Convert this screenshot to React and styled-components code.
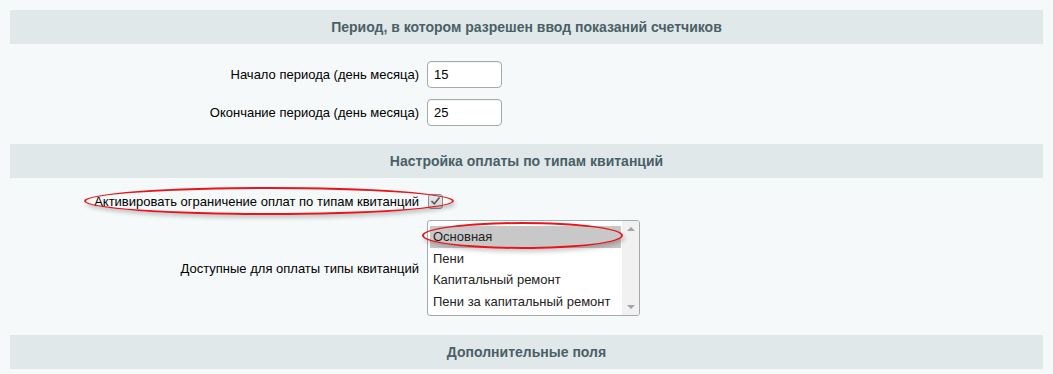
import React from 'react';
import styled, { createGlobalStyle } from 'styled-components';

const GlobalStyle = createGlobalStyle`
  body {
    margin: 0;
    background: #f5f9f9;
    font-family: "Liberation Sans", Arial, sans-serif;
    font-size: 13px;
    color: #000;
  }
`;

const Page = styled.div`
  padding: 10px 10px 0;
  width: 1033px;
`;

const SectionHeader = styled.div`
  height: 34px;
  background: #e0e8ea;
  display: flex;
  align-items: center;
  justify-content: center;
  font-weight: bold;
  font-size: 14px;
  color: #4b5f66;
`;

const SectionBody = styled.div`
  padding: ${(p) => p.$pad};
`;

const Row = styled.div`
  display: grid;
  grid-template-columns: 413px 1fr;
  column-gap: 4px;
  align-items: center;
  min-height: ${(p) => p.$h || 38}px;
  position: relative;
`;

const Label = styled.div`
  text-align: right;
  padding-right: 4px;
  white-space: nowrap;
`;

const Cell = styled.div`
  display: flex;
  align-items: center;
`;

const TextInput = styled.div`
  box-sizing: border-box;
  width: 75px;
  height: 27px;
  border: 1px solid #a4abad;
  border-radius: 4px;
  background: #fff;
  padding-left: 6px;
  display: flex;
  align-items: center;
  box-shadow: inset 0 1px 1px rgba(0, 0, 0, 0.06);
`;

const Checkbox = styled.div`
  box-sizing: border-box;
  width: 15px;
  height: 15px;
  border: 1px solid #8b9396;
  border-radius: 3px;
  background: linear-gradient(#e6e9ea, #d2d6d7);
  display: flex;
  align-items: center;
  justify-content: center;
  margin-left: 1px;
`;

const ListBox = styled.div`
  box-sizing: border-box;
  width: 213px;
  height: 96px;
  border: 1px solid #a4abad;
  border-radius: 3px;
  background: #fff;
  display: flex;
  overflow: hidden;
`;

const Options = styled.div`
  flex: 1;
  padding: 5px 1px 0 2px;
`;

const Option = styled.div`
  height: 21.5px;
  display: flex;
  align-items: center;
  padding-left: 3px;
  color: #222;
  background: ${(p) => (p.$selected ? '#c8c8c8' : 'transparent')};
`;

const ScrollBar = styled.div`
  width: 17px;
  background: #f1f1f1;
  display: flex;
  flex-direction: column;
  justify-content: space-between;
  align-items: center;
  padding: 6px 0;
  box-sizing: border-box;
`;

const Arrow = styled.div`
  width: 0;
  height: 0;
  border-left: 4px solid transparent;
  border-right: 4px solid transparent;
  ${(p) => (p.$down ? 'border-top: 4px solid #a3a3a3;' : 'border-bottom: 4px solid #a3a3a3;')}
`;

const Ring = styled.div`
  position: absolute;
  box-sizing: border-box;
  border: 2px solid #e8161c;
  border-radius: 50%;
  pointer-events: none;
  box-shadow: 2px 3px 4px rgba(0, 0, 0, 0.2);
`;

export default function App() {
  return (
    <Page>
      <GlobalStyle />
      <SectionHeader>Период, в котором разрешен ввод показаний счетчиков</SectionHeader>
      <SectionBody $pad="11px 0 13px">
        <Row>
          <Label>Начало периода (день месяца)</Label>
          <Cell>
            <TextInput>15</TextInput>
          </Cell>
        </Row>
        <Row>
          <Label>Окончание периода (день месяца)</Label>
          <Cell>
            <TextInput>25</TextInput>
          </Cell>
        </Row>
      </SectionBody>

      <SectionHeader>Настройка оплаты по типам квитанций</SectionHeader>
      <SectionBody $pad="4px 0 19px">
        <Row $h={38}>
          <Label>Активировать ограничение оплат по типам квитанций</Label>
          <Cell>
            <Checkbox>
              <svg width="11" height="10" viewBox="0 0 11 10">
                <path d="M1.5 5 L4.3 7.8 L9.5 1.6" fill="none" stroke="#555" strokeWidth="1.5" />
              </svg>
            </Checkbox>
          </Cell>
          <Ring style={{ left: 74, top: 5, width: 370, height: 28 }} />
        </Row>
        <Row $h={96}>
          <Label>Доступные для оплаты типы квитанций</Label>
          <Cell>
            <ListBox>
              <Options>
                <Option $selected>Основная</Option>
                <Option>Пени</Option>
                <Option>Капитальный ремонт</Option>
                <Option>Пени за капитальный ремонт</Option>
              </Options>
              <ScrollBar>
                <Arrow />
                <Arrow $down />
              </ScrollBar>
            </ListBox>
          </Cell>
          <Ring style={{ left: 412, top: 2, width: 201, height: 27 }} />
        </Row>
      </SectionBody>

      <SectionHeader>Дополнительные поля</SectionHeader>
    </Page>
  );
}
